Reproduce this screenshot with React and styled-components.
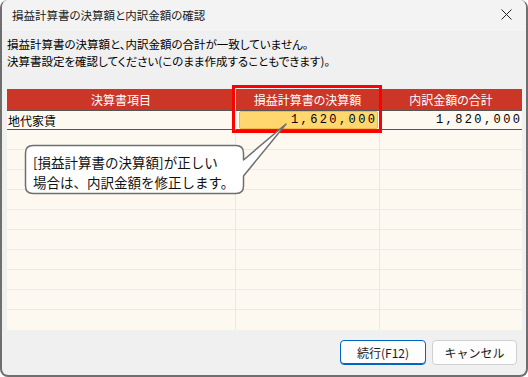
import React from "react";
import styled, { createGlobalStyle } from "styled-components";

const Global = createGlobalStyle`
  html, body { margin: 0; padding: 0; background: #ffffff; }
  body { font-family: "Noto Sans CJK JP", "Noto Sans", sans-serif; }
  * { box-sizing: border-box; }
`;

const JP = `"Noto Sans CJK JP", "Noto Sans", sans-serif`;

const Window = styled.div`
  width: 528px;
  height: 377px;
  background: #f0f0f0;
  border: 2px solid #6f6f6f;
  border-top: none;
  border-radius: 8px;
  overflow: hidden;
  display: flex;
  flex-direction: column;
  font-family: ${JP};
  font-feature-settings: "palt";
  color: #000;
`;

const TitleBar = styled.div`
  height: 31px;
  flex: none;
  background: #f3f3f3;
  display: flex;
  align-items: center;
  justify-content: space-between;
  padding: 0 12px 2px 10px;
  font-size: 11.5px;
  color: #1b1b1b;
`;

const CloseIcon = styled.svg`
  width: 11px;
  height: 11px;
  margin-right: 2px;
`;

const Message = styled.div`
  margin: 5px 0 0 5px;
  font-size: 11.5px;
  line-height: 17px;
`;

const TableWrap = styled.div`
  position: relative;
  margin: 19px 4px 0 5px;
  height: 241px;
  background: #fdf9f1;
`;

const Grid = styled.div`
  display: grid;
  grid-template-columns: 228px 144px 1fr;
`;

const HeadCell = styled.div`
  height: 21px;
  background: #cb3627;
  color: #fff;
  font-size: 12px;
  display: flex;
  align-items: center;
  justify-content: center;
  border-left: ${(p) => (p.$first ? "none" : "1px solid #e2d6d2")};
`;

const Cell = styled.div`
  height: 20px;
  font-size: 12px;
  display: flex;
  align-items: center;
  justify-content: ${(p) => (p.$num ? "flex-end" : "flex-start")};
  padding: 0 ${(p) => (p.$num ? "2px" : "1px")};
  border-left: ${(p) => (p.$first ? "none" : "1px solid #ece9e4")};
  border-top: ${(p) => (p.$dark ? "1px solid #555" : "none")};
  border-bottom: ${(p) =>
    p.$dark ? "1px solid #555" : p.$last ? "none" : "1px solid #ece9e4"};
`;

const Amount = styled.span`
  font-family: "Liberation Mono", monospace;
  font-size: 12px;
  letter-spacing: 2.4px;
  margin-right: -2.4px;
`;

const Highlight = styled.div`
  height: 100%;
  width: 100%;
  margin: 0 -1px;
  background: #ffd76e;
  border: 1px solid #f2b84a;
  border-radius: 2px;
  display: flex;
  align-items: center;
  justify-content: flex-end;
  padding-right: 2px;
`;

const RedFrame = styled.div`
  position: absolute;
  left: 225px;
  top: -4px;
  width: 150px;
  height: 48px;
  border: 3px solid #ff0000;
  pointer-events: none;
`;

const Callout = styled.div`
  position: absolute;
  left: 0;
  top: 0;
  width: 290px;
  height: 110px;
`;

const CalloutShape = styled.svg`
  position: absolute;
  left: 0;
  top: 0;
  overflow: visible;
`;

const CalloutText = styled.div`
  position: absolute;
  left: 26px;
  top: 63px;
  font-size: 13.5px;
  line-height: 20px;
  color: #111;
  white-space: nowrap;
  font-feature-settings: normal;
`;

const Footer = styled.div`
  display: flex;
  justify-content: flex-end;
  gap: 6px;
  padding: 10px 9px 0 0;
`;

const Button = styled.button`
  width: ${(p) => p.$w}px;
  height: 25px;
  border-radius: 4px;
  background: #fdfdfd;
  border: ${(p) => (p.$primary ? "1px solid #0067c0" : "1px solid #d0d0d0")};
  box-shadow: ${(p) => (p.$primary ? "inset 0 -1px 0 #0067c0" : "none")};
  font-family: ${JP};
  font-size: 12px;
  color: #1a1a1a;
  padding: 0;
  display: flex;
  align-items: center;
  justify-content: center;
`;

const emptyRows = Array.from({ length: 10 });

export default function App() {
  return (
    <>
      <Global />
      <Window>
        <TitleBar>
          <span>損益計算書の決算額と内訳金額の確認</span>
          <CloseIcon viewBox="0 0 11 11">
            <path d="M0.5 0.5 L10.5 10.5 M10.5 0.5 L0.5 10.5" stroke="#222" strokeWidth="1" />
          </CloseIcon>
        </TitleBar>
        <Message>
          損益計算書の決算額と、内訳金額の合計が一致していません。
          <br />
          決算書設定を確認してください(このまま作成することもできます)。
        </Message>
        <TableWrap>
          <Grid>
            <HeadCell $first>決算書項目</HeadCell>
            <HeadCell>損益計算書の決算額</HeadCell>
            <HeadCell>内訳金額の合計</HeadCell>

            <Cell $first $dark>地代家賃</Cell>
            <Cell $dark $num>
              <Highlight>
                <Amount>1,620,000</Amount>
              </Highlight>
            </Cell>
            <Cell $dark $num>
              <Amount>1,820,000</Amount>
            </Cell>

            {emptyRows.map((_, i) => (
              <React.Fragment key={i}>
                <Cell $first $last={i === 9} />
                <Cell $last={i === 9} />
                <Cell $last={i === 9} />
              </React.Fragment>
            ))}
          </Grid>
          <RedFrame />
          <Callout>
            <CalloutShape width="290" height="110" viewBox="0 0 290 110">
              <path
                d="M26 56.5 H229 Q236.5 56.5 236.5 64 V71 L279 35 L236.5 87 V97 Q236.5 104.5 229 104.5 H26 Q18.5 104.5 18.5 97 V64 Q18.5 56.5 26 56.5 Z"
                fill="#ffffff"
                stroke="#6f6f6f"
                strokeWidth="1.5"
                strokeLinejoin="round"
              />
            </CalloutShape>
            <CalloutText>
              [損益計算書の決算額]が正しい
              <br />
              場合は、内訳金額を修正します。
            </CalloutText>
          </Callout>
        </TableWrap>
        <Footer>
          <Button $primary $w={86}>続行(F12)</Button>
          <Button $w={85}>キャンセル</Button>
        </Footer>
      </Window>
    </>
  );
}
